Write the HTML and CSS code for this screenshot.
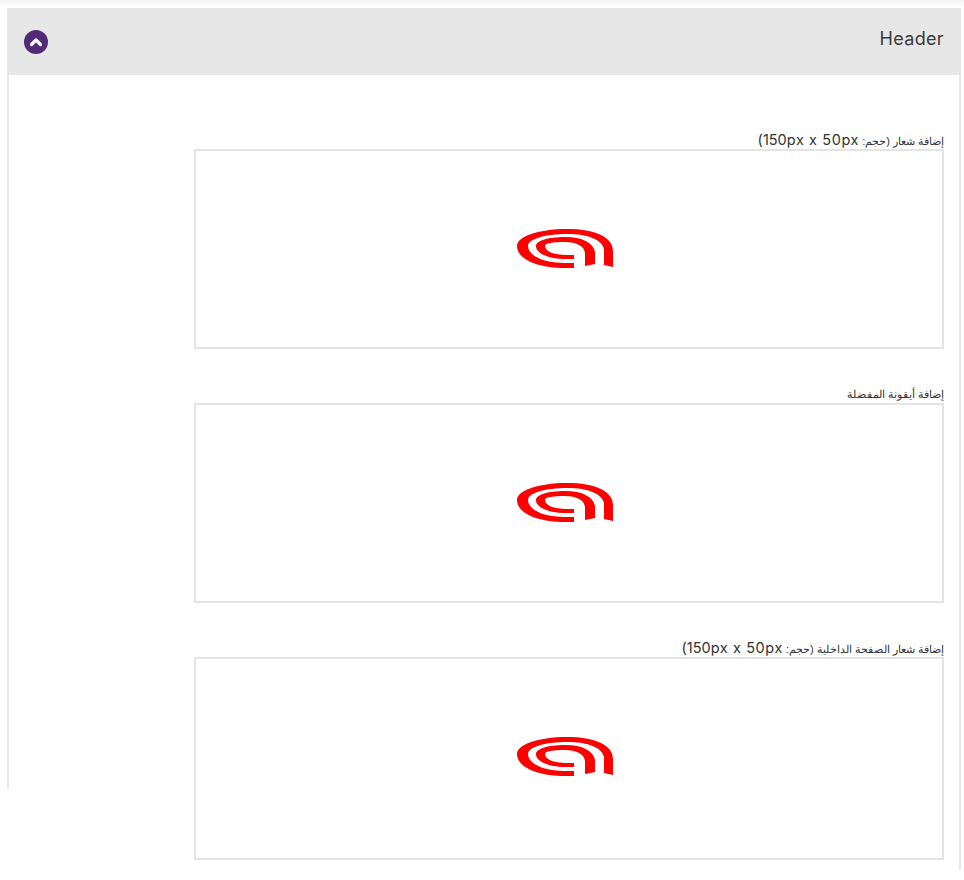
FILE: index.html
```html
<!DOCTYPE html>
<html lang="ar">
<head>
<meta charset="utf-8">
<title>Header</title>
<link rel="stylesheet" href="styles.css">
</head>
<body>
<svg class="defs" width="0" height="0" aria-hidden="true">
  <symbol id="logo" viewBox="0 0 96 39">
    <path fill="#f00" d="M96 38 L96 22 C96 8 78 0 50 0 C20 0 0 8 0 17 C0 30 20 39 48 39 L57 39 L57 34 L48 34 C25 34 11 26 11 17 C11 10 28 5 50 5 C72 5 85 11 87 20 L87 36 Z"/>
    <path fill="#f00" d="M78 35 L78 23 C76 14 66 8 48 8 C30 8 19 12 19 17 C19 24 30 30 50 30 L57 30 L57 26 L50 26 C36 26 28 22 28 17 C28 14 36 13 48 13 C60 13 67 17 68 24 L68 37 Z"/>
  </symbol>
</svg>
<main class="panel">
  <header class="panel-head">
    <h2 class="panel-title">Header</h2>
    <span class="toggle">
      <svg viewBox="0 0 24 24" width="24" height="24" aria-hidden="true"><path d="M7.5 14.5 12 10l4.5 4.5" fill="none" stroke="#fff" stroke-width="3.2" stroke-linecap="round" stroke-linejoin="round"/></svg>
    </span>
  </header>
  <section class="panel-body">
    <div class="field">
      <label class="field-label"><span dir="rtl">إضافة شعار (حجم: <bdi class="latin">150px x 50px</bdi><span class="latin">)</span></span></label>
      <div class="dropzone"><svg class="logo"><use href="#logo"/></svg></div>
    </div>
    <div class="field">
      <label class="field-label"><span dir="rtl">إضافة أيقونة المفضلة</span></label>
      <div class="dropzone"><svg class="logo"><use href="#logo"/></svg></div>
    </div>
    <div class="field">
      <label class="field-label"><span dir="rtl">إضافة شعار الصفحة الداخلية (حجم: <bdi class="latin">150px x 50px</bdi><span class="latin">)</span></span></label>
      <div class="dropzone dropzone-tall"><svg class="logo"><use href="#logo"/></svg></div>
    </div>
  </section>
</main>
</body>
</html>
```

FILE: styles.css
```css
* { box-sizing: border-box; }
html, body { height: 100%; }
body {
  margin: 0;
  padding: 8px 3px 0 7px;
  background: linear-gradient(#f4f4f4 0, #fff 8px) no-repeat;
  background-color: #fff;
  font-family: "Inter", "Liberation Sans", sans-serif;
  color: #333;
  overflow: hidden;
}
.defs { position: absolute; }
.panel {
  width: 954px;
  display: flex;
  flex-direction: column;
}
.panel-head {
  height: 67px;
  background: #e7e7e7;
  display: flex;
  flex-direction: row-reverse;
  justify-content: space-between;
  align-items: center;
  padding: 0 17px;
}
.panel-title {
  margin: 0 0 6px;
  font-size: 18px;
  font-weight: 400;
  letter-spacing: 0.35px;
  color: #3b3b3b;
}
.toggle {
  width: 24px;
  height: 24px;
  border-radius: 50%;
  background: #532a78;
  display: flex;
}
.panel-body {
  height: 795px;
  padding: 56px 15px 0 187px;
  border-right: 2px solid #e7e7e7;
  background: linear-gradient(#e7e7e7, #e7e7e7) left top / 2px 713px no-repeat;
  display: flex;
  flex-direction: column;
  gap: 36px;
}
.field { display: flex; flex-direction: column; }
.field-label {
  display: block;
  height: 18px;
  font-size: 11px;
  line-height: 18px;
  text-align: right;
  font-family: "Liberation Sans", sans-serif;
  color: #333;
  white-space: nowrap;
}
.latin {
  font-family: "Inter", sans-serif;
  font-size: 14.5px;
  letter-spacing: 0.6px;
}
.dropzone {
  height: 200px;
  border: 2px solid #e4e4e4;
  display: flex;
  align-items: center;
  justify-content: center;
}
.dropzone-tall { height: 203px; }
.logo { width: 96px; height: 39px; margin: 0 8px 2px 0; }
.dropzone-tall .logo { margin-bottom: 5px; }
```
